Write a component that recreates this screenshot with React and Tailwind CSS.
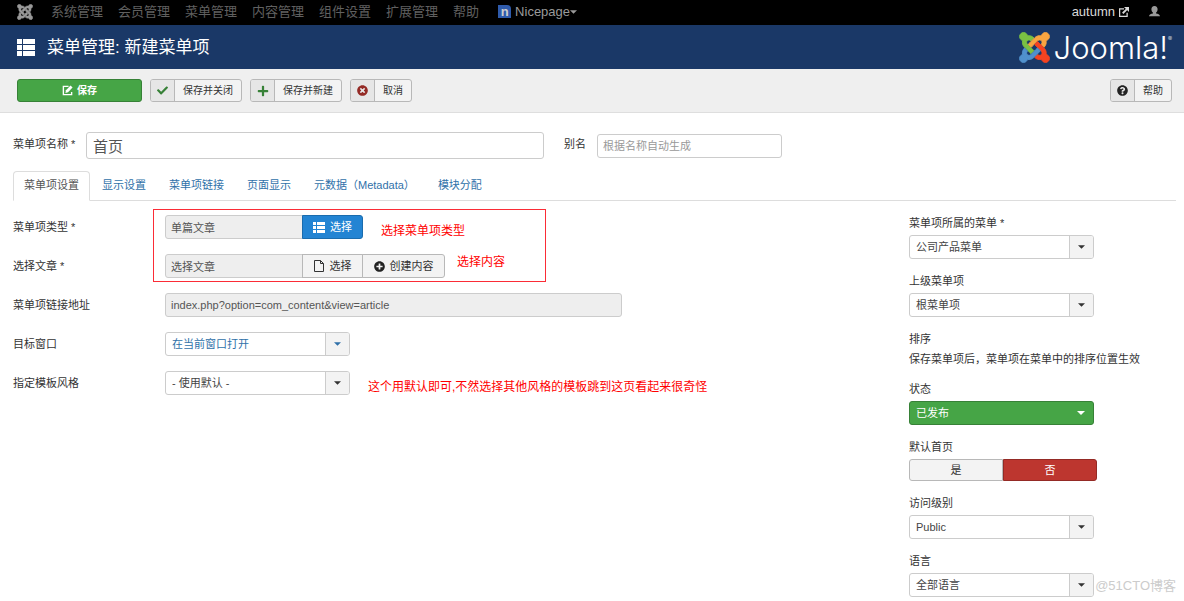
import React, { useState } from 'react';
import { FaCheck, FaPlus, FaTimesCircle, FaQuestionCircle, FaPlusCircle } from 'react-icons/fa';

const navLinks = ['系统管理', '会员管理', '菜单管理', '内容管理', '组件设置', '扩展管理', '帮助'];

const tabs = ['菜单项设置', '显示设置', '菜单项链接', '页面显示', '元数据（Metadata）', '模块分配'];

const joomlaPaths = [
  'M.6 92.1C.6 58.8 27.4 32 60.4 32c30 0 54.5 21.9 59.2 50.2 32.6-7.6 67.1.6 96.5 30l-44.3 44.3c-20.5-20.5-42.6-16.3-55.4-3.5-14.3 14.3-14.3 37.9 0 52.2l99.5 99.5-44 44.3c-87.7-87.2-49.7-49.7-99.8-99.7-26.8-26.5-35-64.8-24.8-98.9C20.4 144.6.6 120.7.6 92.1z',
  'M130.1 208.5l44.3 44.3c10-10 89.7-89.7 99.7-99.8 14.3-14.3 37.6-14.3 51.9 0 12.8 12.8 17 35-3.5 55.4l44 44.3c31.2-31.2 38.5-67.6 28.9-101.2 29.2-4.1 51.9-29.2 51.9-59.5 0-33.2-26.8-60.1-59.8-60.1-30.3 0-55.4 22.5-59.5 51.6-33.8-9.9-71.7-1.5-98.3 25.1-18.3 19.1-71.1 71.5-99.6 99.9z',
  'M396.4 360.7c8.2-32.7-.9-68.5-26.3-93.9-11.8-12.2 5 4.7-99.5-99.7l-44.3 44.3 99.7 99.7c14.3 14.3 14.3 37.6 0 51.9-12.8 12.8-35 17-55.4-3.5l-44 44.3c27.6 30.2 68 38.8 102.7 28 5.5 27.4 29.7 48.1 58.9 48.1 33 0 59.8-26.8 59.8-60.1 0-30.2-22.5-55-51.6-59.1z',
  'M312.1 307.6l-44-44.3c-87 86.4-50.4 50.4-99.7 99.8-14.3 14.3-37.6 14.3-51.9 0-13.1-13.4-16.9-35.3 3.2-55.4l-44-44.3c-30.2 30.2-38 65.2-29.5 98.3-26.7 6-46.2 29.9-46.2 58.2C0 453.2 26.8 480 59.8 480c28.6 0 52.5-19.8 58.6-46.7 32.7 8.2 68.5-.6 94.2-26 32.1-32 12.2-12.4 99.5-99.7z',
];

const JoomlaMark = ({ className, colors }) => (
  <svg viewBox="-8 24 464 464" className={className} strokeWidth="14" aria-hidden="true">
    {joomlaPaths.map((d, i) => (
      <path key={d} d={d} fill={colors[i]} stroke={colors[i]} />
    ))}
  </svg>
);

const ListIcon = ({ className }) => (
  <svg viewBox="0 0 18 17" className={className} fill="currentColor" shapeRendering="crispEdges" aria-hidden="true">
    <path d="M0 0h5v5H0zM6 0h12v5H6zM0 6h5v5H0zM6 6h12v5H6zM0 12h5v5H0zM6 12h12v5H6z" />
  </svg>
);

const SmallListIcon = ({ className }) => (
  <svg viewBox="0 0 12 11" className={className} fill="currentColor" shapeRendering="crispEdges" aria-hidden="true">
    <path d="M0 0h3v3H0zM4 0h8v3H4zM0 4h3v3H0zM4 4h8v3H4zM0 8h3v3H0zM4 8h8v3H4z" />
  </svg>
);

const EditIcon = ({ className }) => (
  <svg viewBox="0 0 16 16" className={className} fill="none" stroke="currentColor" strokeWidth="2" aria-hidden="true">
    <path d="M9.500 2H2v12h12v-4" />
    <path d="M5 11.500l.8-4L12.400.8l3 3-6.600 6.700z" fill="currentColor" stroke="none" />
  </svg>
);

const ExternalIcon = ({ className }) => (
  <svg viewBox="0 0 16 16" className={className} fill="none" stroke="currentColor" strokeWidth="2" aria-hidden="true">
    <path d="M8 3H1v12h12V9" />
    <path d="M6 10l7-7" strokeWidth="3" />
    <path d="M8 0h8v8z" fill="currentColor" stroke="none" />
  </svg>
);

const UserIcon = ({ className }) => (
  <svg viewBox="0 0 16 16" className={className} fill="currentColor" aria-hidden="true">
    <path d="M8 0c3 0 4.500 1.800 4.500 4.800 0 2.200-.9 3.900-2.200 4.800v1.200c2.700.4 5.200 1.200 5.700 4.200H0c.5-3 3-3.800 5.700-4.200V9.600C4.400 8.700 3.500 7 3.500 4.800 3.500 1.800 5 0 8 0z" />
  </svg>
);

const FileIcon = ({ className }) => (
  <svg viewBox="0 0 11 12" className={className} fill="none" stroke="currentColor" aria-hidden="true">
    <path d="M.5.5h6l3 3v8h-9zM6.500.5v3h3" />
  </svg>
);

const Caret = ({ className }) => (
  <svg viewBox="0 0 8 4" className={className} fill="currentColor" aria-hidden="true">
    <path d="M0 0h8L4 4z" />
  </svg>
);

const ToolbarButton = ({ icon: Icon, iconClass, children }) => (
  <button className="flex h-[23px] rounded-[3px] border border-[#b8b8b8] bg-[#f3f3f3] text-[10px] text-[#333] overflow-hidden">
    <span className="flex h-full w-6 items-center justify-center border-r border-[#b8b8b8] bg-[#e6e6e6]">
      <Icon className={iconClass} />
    </span>
    <span className="flex h-full items-center px-2">{children}</span>
  </button>
);

const Select = ({ id, options, tone = 'default' }) => {
  const tones = {
    default: 'bg-white border-[#ccc] text-[#444]',
    link: 'bg-white border-[#ccc] text-[#3071a9]',
    success: 'bg-[#46a546] border-[#378137] text-white',
  };
  const caretTones = {
    default: 'border-l border-[#ccc] bg-[#f3f3f3] text-[#333]',
    link: 'border-l border-[#ccc] bg-[#f3f3f3] text-[#3071a9]',
    success: 'text-white',
  };
  return (
    <div className="relative h-6 w-[185px]">
      <select id={id} className={`h-6 w-full appearance-none rounded-[3px] border pr-6 pl-[6px] text-[11px] ${tones[tone]}`}>
        {options.map((option) => (
          <option key={option}>{option}</option>
        ))}
      </select>
      <span className={`pointer-events-none absolute inset-y-px right-px flex w-6 items-center justify-center rounded-r-[2px] ${caretTones[tone]}`}>
        <Caret className={tone === 'success' ? 'h-1 w-2' : 'h-1 w-[7px]'} />
      </span>
    </div>
  );
};

const Row = ({ id, label, children }) => (
  <div className="flex h-6">
    <label htmlFor={id} className="w-[152px] shrink-0 leading-6">{label}</label>
    {children}
  </div>
);

const SideField = ({ id, label, options, tone }) => (
  <div className="flex flex-col gap-1">
    <label htmlFor={id} className="leading-4">{label}</label>
    <Select id={id} options={options} tone={tone} />
  </div>
);

const Note = ({ className, children }) => (
  <span className={`text-xs leading-4 whitespace-nowrap text-[#ff0000] ${className}`}>{children}</span>
);

const readonlyInput = 'h-6 border border-[#ccc] bg-[#eee] px-[5px] text-[11px] text-[#555]';

export default function App() {
  const [activeTab, setActiveTab] = useState('菜单项设置');
  const [isHome, setIsHome] = useState('否');

  return (
    <div className="relative min-h-screen bg-white font-['Liberation_Sans','Noto_Sans_CJK_SC',sans-serif] text-[11px] text-[#333]">
      <nav className="flex h-[25px] items-center bg-black pr-6 pb-0.5 pl-[17px] text-[13px] text-[#606060]">
        <a href="#" className="mr-[18px]" aria-label="Joomla">
          <JoomlaMark className="size-4" colors={['#999', '#999', '#999', '#999']} />
        </a>
        <div className="flex flex-1 items-center gap-[15px]">
          {navLinks.map((link) => (
            <a key={link} href="#">{link}</a>
          ))}
          <a href="#" className="flex items-center gap-1 pl-1 text-[#9a9a9a]">
            <span className="flex size-[13px] items-center justify-center rounded-tr-[4px] bg-[#2f5bab] font-bold leading-none text-[#ccc]">n</span>
            <span className="flex items-center">
              Nicepage
              <Caret className="h-1 w-[7px]" />
            </span>
          </a>
        </div>
        <a href="#" className="flex items-center gap-1 text-[#d9d9d9]">
          autumn
          <ExternalIcon className="size-[10px]" />
        </a>
        <a href="#" className="ml-5" aria-label="User">
          <UserIcon className="size-[11px] text-[#999]" />
        </a>
      </nav>

      <header className="flex h-11 items-center bg-[#1a3867] pr-3 pl-[17px] text-white">
        <ListIcon className="mr-3 h-[17px] w-[18px]" />
        <h1 className="flex-1 pt-0.5 text-[17px]">菜单管理: 新建菜单项</h1>
        <JoomlaMark className="mr-1 size-[31px]" colors={['#7ac143', '#f9a541', '#f44321', '#5091cd']} />
        <span className="flex font-[Inter,sans-serif] text-[31px] leading-none font-light">
          Joomla!<sup className="top-0 pt-1 text-[6px] leading-none">®</sup>
        </span>
      </header>

      <div className="flex h-11 items-center gap-2 border-b border-[#dedede] bg-[#efefef] pr-3 pl-[17px]">
        <button className="flex h-[23px] w-[125px] items-center justify-center gap-1 rounded-[3px] border border-[#378137] bg-[#46a546] text-[10px] font-bold text-white">
          <EditIcon className="size-[11px]" />
          保存
        </button>
        <ToolbarButton icon={FaCheck} iconClass="size-[11px] text-[#378137]">保存并关闭</ToolbarButton>
        <ToolbarButton icon={FaPlus} iconClass="size-3 text-[#378137]">保存并新建</ToolbarButton>
        <ToolbarButton icon={FaTimesCircle} iconClass="size-[11px] text-[#942a25]">取消</ToolbarButton>
        <div className="ml-auto">
          <ToolbarButton icon={FaQuestionCircle} iconClass="size-[11px] text-[#222]">帮助</ToolbarButton>
        </div>
      </div>

      <main className="pt-[19px] pr-2 pl-[13px]">
        <div className="flex h-[27px] items-center">
          <label htmlFor="title" className="w-[73px] shrink-0 self-start leading-6">菜单项名称 *</label>
          <input id="title" defaultValue="首页" className="h-[27px] w-[458px] rounded-[3px] border border-[#ccc] px-[6px] text-[15px] text-[#555]" />
          <label htmlFor="alias" className="mr-[11px] ml-5 self-start leading-6">别名</label>
          <input id="alias" placeholder="根据名称自动生成" className="h-6 w-[185px] rounded-[3px] border border-[#ccc] px-[5px] text-[11px] placeholder:text-[#999]" />
        </div>

        <div role="tablist" className="mt-3 flex h-[30px] border-b border-[#ddd]">
          {tabs.map((tab) => (
            <button
              key={tab}
              role="tab"
              aria-selected={activeTab === tab}
              onClick={() => setActiveTab(tab)}
              className={`-mb-px rounded-t-[4px] border px-[10px] pb-0.5 mr-px ${
                activeTab === tab
                  ? 'border-[#ddd] border-b-white bg-white text-[#555]'
                  : 'border-transparent text-[#3071a9]'
              }`}
            >
              {tab}
            </button>
          ))}
        </div>

        <div className="flex justify-between pt-[14px]">
          <div className="flex flex-col gap-[15px]">
            <div className="relative flex flex-col gap-[15px]">
              <div className="pointer-events-none absolute -top-[6px] -bottom-1 left-[140px] w-[393px] border border-red-500" />
              <Row id="type" label="菜单项类型 *">
                <input id="type" readOnly value="单篇文章" className={`w-[138px] rounded-l-[3px] ${readonlyInput}`} />
                <button className="-ml-px flex w-[61px] items-center justify-center gap-[5px] rounded-r-[3px] border border-[#1a6cae] bg-[#2384d3] text-white">
                  <SmallListIcon className="h-[11px] w-3" />
                  选择
                </button>
                <Note className="ml-[18px] self-end">选择菜单项类型</Note>
              </Row>
              <Row id="article" label="选择文章 *">
                <input id="article" readOnly value="选择文章" className={`w-[138px] rounded-l-[3px] ${readonlyInput}`} />
                <button className="-ml-px flex w-[61px] items-center justify-center gap-[5px] border border-[#b8b8b8] bg-[#f3f3f3]">
                  <FileIcon className="h-3 w-[11px]" />
                  选择
                </button>
                <button className="-ml-px flex w-[83px] items-center justify-center gap-[5px] rounded-r-[3px] border border-[#b8b8b8] bg-[#f3f3f3]">
                  <FaPlusCircle className="size-[11px] text-[#222]" />
                  创建内容
                </button>
                <Note className="ml-3">选择内容</Note>
              </Row>
            </div>
            <Row id="link" label="菜单项链接地址">
              <input id="link" readOnly value="index.php?option=com_content&view=article" className={`w-[457px] rounded-[3px] ${readonlyInput}`} />
            </Row>
            <Row id="target" label="目标窗口">
              <Select id="target" options={['在当前窗口打开']} tone="link" />
            </Row>
            <Row id="template" label="指定模板风格">
              <Select id="template" options={['- 使用默认 -']} />
              <Note className="ml-[18px] self-end">这个用默认即可,不然选择其他风格的模板跳到这页看起来很奇怪</Note>
            </Row>
          </div>

          <div className="flex w-[267px] flex-col gap-[14px]">
            <SideField id="menutype" label="菜单项所属的菜单 *" options={['公司产品菜单']} />
            <SideField id="parent" label="上级菜单项" options={['根菜单项']} />
            <div className="flex flex-col gap-1 leading-4">
              <span>排序</span>
              <span>保存菜单项后，菜单项在菜单中的排序位置生效</span>
            </div>
            <SideField id="status" label="状态" options={['已发布']} tone="success" />
            <fieldset>
              <legend className="mb-1 leading-4">默认首页</legend>
              <div className="flex h-[22px] w-[188px]">
                {['是', '否'].map((option) => (
                  <label
                    key={option}
                    className={`flex flex-1 items-center justify-center border first:rounded-l-[3px] last:rounded-r-[3px] ${
                      isHome === option
                        ? 'border-[#942a25] bg-[#bd362f] text-white'
                        : 'border-[#b8b8b8] bg-[#f3f3f3]'
                    }`}
                  >
                    <input
                      type="radio"
                      name="home"
                      className="sr-only"
                      checked={isHome === option}
                      onChange={() => setIsHome(option)}
                    />
                    {option}
                  </label>
                ))}
              </div>
            </fieldset>
            <SideField id="access" label="访问级别" options={['Public']} />
            <SideField id="language" label="语言" options={['全部语言']} />
          </div>
        </div>
      </main>

      <span className="absolute top-[576px] right-2 text-[13px] leading-5 text-[#ccc]">@51CTO博客</span>
    </div>
  );
}
